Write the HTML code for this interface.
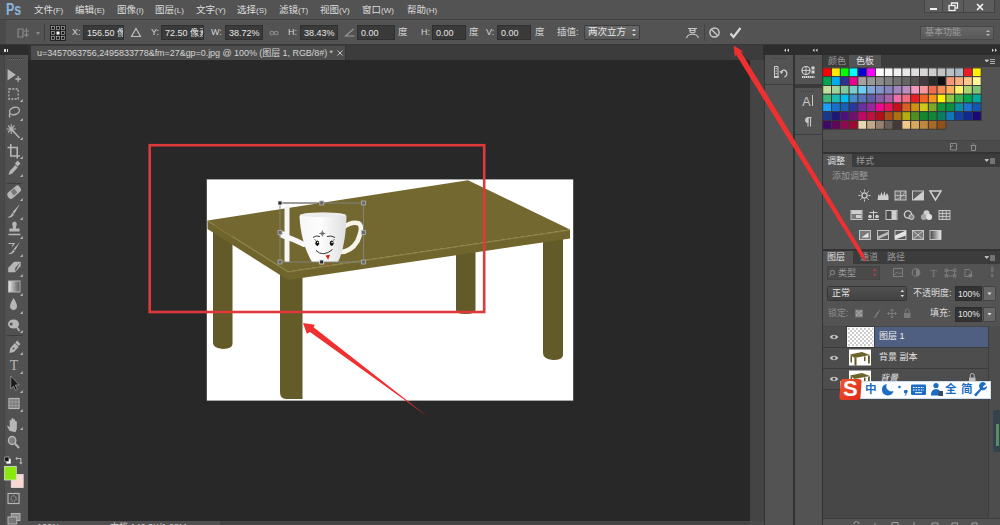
<!DOCTYPE html>
<html lang="zh-CN">
<head>
<meta charset="utf-8">
<title>Photoshop</title>
<style>
*{box-sizing:border-box;margin:0;padding:0}
html,body{width:1000px;height:525px;overflow:hidden;background:#282828}
body{position:relative;font-family:"Liberation Sans","Noto Sans CJK SC",sans-serif;font-size:9px;color:#d8d8d8;line-height:1}
.a{position:absolute}
.t{position:absolute;white-space:nowrap}
/* bars */
#menubar{left:0;top:0;width:1000px;height:19px;background:#535353}
#optbar{left:0;top:19px;width:1000px;height:26px;background:#535353;border-top:1px solid #424242;border-bottom:1px solid #383838}
#tabbar{left:0;top:45px;width:764px;height:15px;background:#3c3c3c}
.mi{position:absolute;top:5px;font-size:9.5px;color:#dedede;white-space:nowrap}
.mi small{font-size:8px}
.inp{position:absolute;background:#3a3a3a;border:1px solid #303030;color:#e6e6e6;font-size:9px;padding:3px 0 0 3px;white-space:nowrap;overflow:hidden}
.ol{position:absolute;color:#d6d6d6;font-size:9px;white-space:nowrap}
</style>
</head>
<body>
<!-- MENU BAR -->
<div id="menubar" class="a">
  <div class="t" style="left:5.500px;top:1.500px;font-size:16px;font-weight:bold;color:#8db3df;transform:scaleX(0.780);transform-origin:0 0">Ps</div>
  <div class="mi" style="left:34px">文件<small>(F)</small></div>
  <div class="mi" style="left:75px">编辑<small>(E)</small></div>
  <div class="mi" style="left:117px">图像<small>(I)</small></div>
  <div class="mi" style="left:155px">图层<small>(L)</small></div>
  <div class="mi" style="left:196px">文字<small>(Y)</small></div>
  <div class="mi" style="left:237px">选择<small>(S)</small></div>
  <div class="mi" style="left:279px">滤镜<small>(T)</small></div>
  <div class="mi" style="left:320px">视图<small>(V)</small></div>
  <div class="mi" style="left:362px">窗口<small>(W)</small></div>
  <div class="mi" style="left:407px">帮助<small>(H)</small></div>
  <!-- window controls -->
  <div class="a" style="left:924px;top:0;width:19px;height:13px;background:#5c5c5c;border:1px solid #444;border-top:none"></div>
  <div class="a" style="left:943px;top:0;width:21px;height:13px;background:#5c5c5c;border:1px solid #444;border-top:none;border-left:none"></div>
  <div class="a" style="left:964px;top:0;width:31px;height:13px;background:#5c5c5c;border:1px solid #444;border-top:none;border-left:none"></div>
  <div class="a" style="left:930px;top:8px;width:7px;height:2px;background:#f0f0f0"></div>
  <svg class="a" style="left:948px;top:2px" width="11" height="10" viewBox="0 0 11 10"><path d="M3.5 3V1h6v5H7.500" fill="none" stroke="#f0f0f0" stroke-width="1.3"/><rect x="1" y="3.5" width="6" height="5" fill="none" stroke="#f0f0f0" stroke-width="1.3"/></svg>
  <svg class="a" style="left:976px;top:3px" width="8" height="8" viewBox="0 0 8 8"><path d="M1 1l6 6M7 1L1 7" stroke="#f4f4f4" stroke-width="1.6"/></svg>
</div>

<!-- OPTIONS BAR -->
<div id="optbar" class="a"></div>
<div class="a" style="left:0;top:20px;width:6px;height:24px;background:#4a4a4a"></div>
<!-- tool icon -->
<svg class="a" style="left:16px;top:26px" width="16" height="14" viewBox="0 0 16 14"><path d="M2 3h5v8H2zM8 5h5M10.500 2v9M8 9h5" fill="none" stroke="#8a8a8a" stroke-width="1.2"/></svg>
<div class="a" style="left:36px;top:32px;width:0;height:0;border-left:2.5px solid transparent;border-right:2.5px solid transparent;border-top:3px solid #8a8a8a"></div>
<div class="a" style="left:44px;top:24px;width:1px;height:17px;background:#404040"></div>
<!-- reference point grid -->
<svg class="a" style="left:50px;top:25px" width="16" height="16" viewBox="0 0 16 16"><rect x="0" y="0" width="16" height="16" fill="#242424"/>
<g fill="#1a1a1a" stroke="#a8a8a8" stroke-width="0.700"><rect x="1.500" y="1.500" width="3" height="3"/><rect x="6.500" y="1.500" width="3" height="3"/><rect x="11.500" y="1.500" width="3" height="3"/><rect x="1.500" y="6.500" width="3" height="3"/><rect x="11.500" y="6.500" width="3" height="3"/><rect x="1.500" y="11.500" width="3" height="3"/><rect x="6.500" y="11.500" width="3" height="3"/><rect x="11.500" y="11.500" width="3" height="3"/></g><rect x="6.500" y="6.500" width="3" height="3" fill="#fff"/></svg>
<div class="ol" style="left:72px;top:28px">X:</div>
<div class="inp" style="left:83px;top:25px;width:41px;height:15px">156.50 像素</div>
<svg class="a" style="left:130px;top:27px" width="12" height="11" viewBox="0 0 12 11"><path d="M6 1.500L10.500 9.500h-9z" fill="none" stroke="#bdbdbd" stroke-width="1.200"/></svg>
<div class="ol" style="left:151px;top:28px">Y:</div>
<div class="inp" style="left:161px;top:25px;width:43px;height:15px">72.50 像素</div>
<div class="ol" style="left:211px;top:28px">W:</div>
<div class="inp" style="left:225px;top:25px;width:38px;height:15px">38.72%</div>
<svg class="a" style="left:269px;top:30px" width="10" height="6" viewBox="0 0 10 6"><circle cx="2.800" cy="3" r="1.800" fill="none" stroke="#8c8c8c" stroke-width="1.100"/><circle cx="7.200" cy="3" r="1.800" fill="none" stroke="#8c8c8c" stroke-width="1.100"/></svg>
<div class="ol" style="left:288px;top:28px">H:</div>
<div class="inp" style="left:300px;top:25px;width:38px;height:15px">38.43%</div>
<svg class="a" style="left:344px;top:28px" width="11" height="9" viewBox="0 0 11 9"><path d="M9.500 1L1.500 8h9" fill="none" stroke="#9a9a9a" stroke-width="1.100"/></svg>
<div class="inp" style="left:357px;top:25px;width:38px;height:15px">0.00</div>
<div class="ol" style="left:398px;top:27px;font-size:9.500px">度</div>
<div class="ol" style="left:421px;top:28px">H:</div>
<div class="inp" style="left:432px;top:25px;width:34px;height:15px">0.00</div>
<div class="ol" style="left:469px;top:27px;font-size:9.500px">度</div>
<div class="ol" style="left:486px;top:28px">V:</div>
<div class="inp" style="left:497px;top:25px;width:34px;height:15px">0.00</div>
<div class="ol" style="left:535px;top:27px;font-size:9.500px">度</div>
<div class="ol" style="left:557px;top:27px;font-size:9.500px">插值:</div>
<div class="a" style="left:584px;top:25px;width:56px;height:15px;background:linear-gradient(#686868,#585858);border:1px solid #3e3e3e;border-radius:1px"></div>
<div class="ol" style="left:588px;top:27px;font-size:9.500px;color:#e8e8e8">两次立方</div>
<div class="a" style="left:632px;top:29px;width:0;height:0;border-left:2px solid transparent;border-right:2px solid transparent;border-bottom:2.500px solid #ddd"></div>
<div class="a" style="left:632px;top:33.500px;width:0;height:0;border-left:2px solid transparent;border-right:2px solid transparent;border-top:2.500px solid #ddd"></div>
<!-- warp / cancel / commit -->
<svg class="a" style="left:685px;top:26px" width="15" height="14" viewBox="0 0 15 14"><path d="M3 2.500h9M1.500 12c1.500-5 10.500-5 12 0M5 3c0 2 5 2 5 0M5 3v3q2.500 1.500 5 0V3" fill="none" stroke="#c4c4c4" stroke-width="1.100"/></svg>
<svg class="a" style="left:708px;top:26px" width="13" height="13" viewBox="0 0 13 13"><circle cx="6.500" cy="6.500" r="4.600" fill="none" stroke="#c8c8c8" stroke-width="1.500"/><path d="M3.300 3.300l6.400 6.400" stroke="#c8c8c8" stroke-width="1.500"/></svg>
<svg class="a" style="left:729px;top:26px" width="13" height="13" viewBox="0 0 13 13"><path d="M1.500 7.500l3 3.500l7-9" fill="none" stroke="#d8d8d8" stroke-width="2.200"/></svg>
<div class="a" style="left:704px;top:24px;width:1px;height:17px;background:#444"></div>
<!-- workspace dropdown -->
<div class="a" style="left:920px;top:26px;width:74px;height:14px;background:linear-gradient(#666,#595959);border:1px solid #474747"></div>
<div class="ol" style="left:925px;top:28px;font-size:9px;color:#9c9c9c">基本功能</div>
<div class="a" style="left:986px;top:30px;width:0;height:0;border-left:2px solid transparent;border-right:2px solid transparent;border-bottom:2.500px solid #bbb"></div>
<div class="a" style="left:986px;top:34px;width:0;height:0;border-left:2px solid transparent;border-right:2px solid transparent;border-top:2.500px solid #bbb"></div>

<!-- TAB BAR -->
<div id="tabbar" class="a"></div>
<div class="a" style="left:31px;top:46px;width:315px;height:14px;background:#4d4d4d;border-right:1px solid #333"></div>
<div class="t" style="left:37px;top:49px;font-size:9px;color:#d4d4d4;letter-spacing:-0.050px">u=3457063756,2495833778&amp;fm=27&amp;gp=0.jpg @ 100% (图层 1, RGB/8#) *</div>
<svg class="a" style="left:336.500px;top:50px" width="6" height="6" viewBox="0 0 6 6"><path d="M0.500 0.500l5 5M5.500 0.500l-5 5" stroke="#c0c0c0" stroke-width="1"/></svg>
<!-- TOOLBAR -->
<div class="a" style="left:0;top:45px;width:28px;height:480px;background:#515151"></div>
<div class="a" style="left:0;top:55px;width:5px;height:470px;background:#494949;border-right:1px solid #444"></div>
<div class="a" style="left:0;top:45px;width:28px;height:10px;background:#2c2c2c"></div>
<div class="a" style="left:28px;top:45px;width:3px;height:15px;background:#303030"></div>
<div class="a" style="left:4px;top:49px;width:1.500px;height:2.500px;background:#ddd"></div>
<div class="a" style="left:6.500px;top:49px;width:1.500px;height:2.500px;background:#ddd"></div>
<div class="a" style="left:8px;top:58px;width:14px;height:2px;border-top:1px dotted #3a3a3a;border-bottom:1px dotted #6a6a6a"></div>
<svg class="a" style="left:0;top:0" width="28" height="525" viewBox="0 0 28 525"><g transform="translate(14 0) scale(0.920 1) translate(-14 0)">
<path d="M7 69l0 11.500l9-5.700z" fill="#b6b6b6"/><path d="M15.500 79h6M18.500 76v6" stroke="#b6b6b6" stroke-width="1.300"/><rect x="8.500" y="89" width="10" height="10" fill="none" stroke="#b6b6b6" stroke-width="1.300" stroke-dasharray="2.200 1.400"/><path d="M23.500 99v3h-3z" fill="#b6b6b6"/><ellipse cx="14.500" cy="111" rx="5.500" ry="3.600" fill="none" stroke="#b6b6b6" stroke-width="1.400" transform="rotate(-15 14.500 111)"/><path d="M9.500 113.500q-1.500 2.500 0.500 4" fill="none" stroke="#b6b6b6" stroke-width="1.200"/><path d="M23.500 118v3h-3z" fill="#b6b6b6"/><path d="M11 129l9 9" stroke="#b6b6b6" stroke-width="1.700"/><path d="M11 124v10M6 129h10M7.500 125.500l7 7M14.500 125.500l-7 7" stroke="#b6b6b6" stroke-width="1.100"/><path d="M23.500 137v3h-3z" fill="#b6b6b6"/><path d="M10.500 144v12h10M7 147.500h10.500v11" fill="none" stroke="#b6b6b6" stroke-width="1.700"/><path d="M23.500 156v3h-3z" fill="#b6b6b6"/><path d="M8 175l1.500-4l6-6l2.500 2.500l-6 6z" fill="#b6b6b6"/><path d="M15 163.500l3-3l3 3l-3 3z" fill="#b6b6b6"/><path d="M23.500 174v3h-3z" fill="#b6b6b6"/><path d="M6 183.500h17" stroke="#3d3d3d" stroke-width="1"/><rect x="6" y="188.500" width="16" height="7.500" rx="3" fill="#b6b6b6" transform="rotate(-38 14 192)"/><rect x="11.500" y="189.500" width="5" height="5" fill="#777" transform="rotate(-38 14 192)"/><path d="M23.500 198v3h-3z" fill="#b6b6b6"/><path d="M20.500 204l-8 8l1.800 1.800z" fill="#b6b6b6"/><path d="M12 212.500q-1 4-5 4.500q3.500 2 7-2.300z" fill="#b6b6b6"/><path d="M23.500 217v3h-3z" fill="#b6b6b6"/><path d="M12 224a2.500 2.500 0 1 1 5 0l-1 4.500h4v3h-11v-3h4z" fill="#b6b6b6"/><path d="M8 234.500h13" stroke="#b6b6b6" stroke-width="1.500"/><path d="M23.500 236v3h-3z" fill="#b6b6b6"/><path d="M20.500 242l-7 7l1.600 1.600z" fill="#b6b6b6"/><path d="M13 249.500q-1 3.500-5 4q3.500 2 6.800-2.200z" fill="#b6b6b6"/><path d="M8 243.500h6l-2 3" fill="none" stroke="#b6b6b6" stroke-width="1.200"/><path d="M23.500 254v3h-3z" fill="#b6b6b6"/><path d="M8 268l6-6h7l-6 6zM8 268v4h7v-4M15 272l6-6v-4" fill="#b6b6b6" stroke="#b6b6b6" stroke-width="0.600"/><path d="M23.500 274v3h-3z" fill="#b6b6b6"/><defs><linearGradient id="gr1"><stop offset="0" stop-color="#e8e8e8"/><stop offset="1" stop-color="#555"/></linearGradient></defs><rect x="8" y="281" width="12.500" height="11" fill="url(#gr1)" stroke="#b6b6b6" stroke-width="1"/><path d="M23.500 293v3h-3z" fill="#b6b6b6"/><path d="M13.500 298q5 7 3.500 10a4 4 0 0 1-7 0q-1.500-3 3.500-10z" fill="#b6b6b6"/><path d="M23.500 311v3h-3z" fill="#b6b6b6"/><ellipse cx="13.500" cy="324" rx="6" ry="4.500" fill="#b6b6b6"/><circle cx="11" cy="324" r="1.600" fill="#555"/><path d="M17 327l3 4" stroke="#b6b6b6" stroke-width="2"/><path d="M23.500 330v3h-3z" fill="#b6b6b6"/><path d="M6 335.500h17" stroke="#3d3d3d" stroke-width="1"/><path d="M9 353l1-5l5-5l4 4l-5 5z" fill="#b6b6b6"/><path d="M15.500 342.500l2-2l3.500 3.500l-2 2z" fill="#b6b6b6"/><circle cx="13.500" cy="348.500" r="1.100" fill="#555"/><path d="M23.500 352v3h-3z" fill="#b6b6b6"/><text x="14" y="370.500" font-family="Liberation Serif,serif" font-size="15" fill="#b6b6b6" text-anchor="middle">T</text><path d="M23.500 371v3h-3z" fill="#b6b6b6"/><path d="M10.500 376v13l3-3l2.200 4.500l2-1l-2.200-4.500h4.200z" fill="#1a1a1a" stroke="#9a9a9a" stroke-width="0.800"/><path d="M23.500 390v3h-3z" fill="#b6b6b6"/><rect x="8.500" y="398.500" width="11" height="10" fill="#7a7a7a" stroke="#b6b6b6" stroke-width="1.200"/><path d="M12 398.500v10M16 398.500v10M8.500 402h11M8.500 405.500h11" stroke="#b6b6b6" stroke-width="0.500"/><path d="M23.500 409v3h-3z" fill="#b6b6b6"/><path d="M9.500 431q-2.500-3-3-5q1-1 2.800 1.500v-7q1.200-1.200 1.900 0v-2q1.300-1.200 2 0v1q1.300-1 2 0.300v1.500q1.300-0.800 1.900 0.500v6q0 3-1.600 4.500z" fill="#b6b6b6"/><path d="M23.500 427v3h-3z" fill="#b6b6b6"/><circle cx="12" cy="440.500" r="4" fill="#7e7e7e" stroke="#b6b6b6" stroke-width="1.500"/><path d="M15 443.500l4.500 4.500" stroke="#b6b6b6" stroke-width="2.200"/><rect x="6" y="459" width="4.500" height="4.500" fill="#fff" stroke="#bbb" stroke-width="0.500"/><rect x="4" y="457" width="4.500" height="4.500" fill="#111" stroke="#ccc" stroke-width="0.600"/><path d="M17 458.500h4.500v4.500" fill="none" stroke="#b6b6b6" stroke-width="1.200"/><path d="M17.500 456.500l-2 2l2 2zM19.500 462.500l2 2l2-2z" fill="#b6b6b6"/><rect x="11" y="474.500" width="13" height="13" fill="#f9d9cf" stroke="#e6e6e6" stroke-width="0.800"/><rect x="3.500" y="466.500" width="13" height="13.500" fill="#8be80c" stroke="#dcdcdc" stroke-width="0.800"/><rect x="7.500" y="493.500" width="12" height="10" fill="none" stroke="#b6b6b6" stroke-width="1.200"/><circle cx="13.500" cy="498.500" r="2.800" fill="none" stroke="#b6b6b6" stroke-width="1" stroke-dasharray="1.500 1"/><rect x="11" y="513.500" width="9.500" height="7" fill="#8a8a8a" stroke="#b6b6b6" stroke-width="1"/><rect x="7.500" y="517" width="9.500" height="7" fill="#777" stroke="#b6b6b6" stroke-width="1"/>
</g></svg>
<!-- DOCK -->
<div class="a" style="left:763px;top:45px;width:237px;height:480px;background:#333"></div>
<div class="a" style="left:763px;top:45px;width:237px;height:10px;background:#2d2d2d"></div>
<!-- column 1 -->
<div class="a" style="left:765px;top:55px;width:27.500px;height:470px;background:#535353"></div>
<div class="a" style="left:765px;top:84px;width:27.500px;height:1px;background:#3e3e3e"></div>
<!-- column 2 -->
<div class="a" style="left:795px;top:55px;width:26.500px;height:470px;background:#535353"></div>
<div class="a" style="left:795px;top:84px;width:26.500px;height:4px;background:#3a3a3a"></div>
<div class="a" style="left:795px;top:134px;width:26.500px;height:1px;background:#3e3e3e"></div>
<!-- swatches panel -->
<div class="a" style="left:823px;top:55px;width:177px;height:97px;background:#535353"></div>
<div class="a" style="left:823px;top:55px;width:177px;height:12px;background:#3c3c3c"></div>
<div class="a" style="left:849px;top:55px;width:32px;height:12px;background:#535353"></div>
<div class="t" style="left:828px;top:57px;font-size:9px;color:#9a9a9a">颜色</div>
<div class="t" style="left:856px;top:57px;font-size:9px;color:#e2e2e2">色板</div>
<div class="a" style="left:823px;top:140px;width:177px;height:12px;background:#4b4b4b;border-top:1px solid #444"></div>
<!-- adjustments panel -->
<div class="a" style="left:823px;top:154px;width:177px;height:95px;background:#535353"></div>
<div class="a" style="left:823px;top:154px;width:177px;height:13px;background:#3c3c3c"></div>
<div class="a" style="left:823px;top:154px;width:29px;height:13px;background:#535353"></div>
<div class="t" style="left:827px;top:156.500px;font-size:9px;color:#e2e2e2">调整</div>
<div class="t" style="left:856px;top:156.500px;font-size:9px;color:#9a9a9a">样式</div>
<div class="t" style="left:832px;top:172px;font-size:9px;color:#9b9b9b">添加调整</div>
<!-- layers panel -->
<div class="a" style="left:823px;top:251px;width:177px;height:274px;background:#535353"></div>
<div class="a" style="left:823px;top:251px;width:177px;height:12.500px;background:#3c3c3c"></div>
<div class="a" style="left:823px;top:251px;width:30px;height:12.500px;background:#535353"></div>
<div class="t" style="left:827px;top:253px;font-size:9px;color:#e2e2e2">图层</div>
<div class="t" style="left:860px;top:253px;font-size:9px;color:#9a9a9a">通道</div>
<div class="t" style="left:887px;top:253px;font-size:9px;color:#9a9a9a">路径</div>
<div class="a" style="left:823px;top:326px;width:165px;height:192px;background:#474747"></div>
<div class="a" style="left:988px;top:326px;width:12px;height:192px;background:#4d4d4d;border-left:1px solid #3e3e3e"></div>
<div class="a" style="left:823px;top:518px;width:177px;height:7px;background:#535353;border-top:1px solid #3e3e3e"></div>
<svg class="a" style="left:0;top:0" width="1000" height="525" viewBox="0 0 1000 525">
<defs><linearGradient id="gm"><stop offset="0" stop-color="#444"/><stop offset="1" stop-color="#eee"/></linearGradient></defs>
<rect x="822.75" y="67.95" width="8.800" height="8.750" fill="#ff0000" stroke="#383838" stroke-width="0.900"/><rect x="831.55" y="67.95" width="8.800" height="8.750" fill="#ffec00" stroke="#383838" stroke-width="0.900"/><rect x="840.35" y="67.95" width="8.800" height="8.750" fill="#00ff00" stroke="#383838" stroke-width="0.900"/><rect x="849.15" y="67.95" width="8.800" height="8.750" fill="#00ffff" stroke="#383838" stroke-width="0.900"/><rect x="857.95" y="67.95" width="8.800" height="8.750" fill="#0000d0" stroke="#383838" stroke-width="0.900"/><rect x="866.75" y="67.95" width="8.800" height="8.750" fill="#ff00ff" stroke="#383838" stroke-width="0.900"/><rect x="875.55" y="67.95" width="8.800" height="8.750" fill="#ffffff" stroke="#383838" stroke-width="0.900"/><rect x="884.35" y="67.95" width="8.800" height="8.750" fill="#f7f7f7" stroke="#383838" stroke-width="0.900"/><rect x="893.15" y="67.95" width="8.800" height="8.750" fill="#efefef" stroke="#383838" stroke-width="0.900"/><rect x="901.95" y="67.95" width="8.800" height="8.750" fill="#e6e6e6" stroke="#383838" stroke-width="0.900"/><rect x="910.75" y="67.95" width="8.800" height="8.750" fill="#dedede" stroke="#383838" stroke-width="0.900"/><rect x="919.55" y="67.95" width="8.800" height="8.750" fill="#d6d6d6" stroke="#383838" stroke-width="0.900"/><rect x="928.35" y="67.95" width="8.800" height="8.750" fill="#cdcdcd" stroke="#383838" stroke-width="0.900"/><rect x="937.15" y="67.95" width="8.800" height="8.750" fill="#c4c4c4" stroke="#383838" stroke-width="0.900"/><rect x="945.95" y="67.95" width="8.800" height="8.750" fill="#b8c0c8" stroke="#383838" stroke-width="0.900"/><rect x="954.75" y="67.95" width="8.800" height="8.750" fill="#acb8c4" stroke="#383838" stroke-width="0.900"/><rect x="963.55" y="67.95" width="8.800" height="8.750" fill="#ed1c24" stroke="#383838" stroke-width="0.900"/><rect x="972.35" y="67.95" width="8.800" height="8.750" fill="#fff200" stroke="#383838" stroke-width="0.900"/><rect x="822.75" y="76.70" width="8.800" height="8.750" fill="#00a651" stroke="#383838" stroke-width="0.900"/><rect x="831.55" y="76.70" width="8.800" height="8.750" fill="#00aeef" stroke="#383838" stroke-width="0.900"/><rect x="840.35" y="76.70" width="8.800" height="8.750" fill="#2e3192" stroke="#383838" stroke-width="0.900"/><rect x="849.15" y="76.70" width="8.800" height="8.750" fill="#ec008c" stroke="#383838" stroke-width="0.900"/><rect x="857.95" y="76.70" width="8.800" height="8.750" fill="#a8a0a0" stroke="#383838" stroke-width="0.900"/><rect x="866.75" y="76.70" width="8.800" height="8.750" fill="#989898" stroke="#383838" stroke-width="0.900"/><rect x="875.55" y="76.70" width="8.800" height="8.750" fill="#8c8c8c" stroke="#383838" stroke-width="0.900"/><rect x="884.35" y="76.70" width="8.800" height="8.750" fill="#808080" stroke="#383838" stroke-width="0.900"/><rect x="893.15" y="76.70" width="8.800" height="8.750" fill="#727272" stroke="#383838" stroke-width="0.900"/><rect x="901.95" y="76.70" width="8.800" height="8.750" fill="#646464" stroke="#383838" stroke-width="0.900"/><rect x="910.75" y="76.70" width="8.800" height="8.750" fill="#545454" stroke="#383838" stroke-width="0.900"/><rect x="919.55" y="76.70" width="8.800" height="8.750" fill="#423c42" stroke="#383838" stroke-width="0.900"/><rect x="928.35" y="76.70" width="8.800" height="8.750" fill="#2a2a2a" stroke="#383838" stroke-width="0.900"/><rect x="937.15" y="76.70" width="8.800" height="8.750" fill="#101010" stroke="#383838" stroke-width="0.900"/><rect x="945.95" y="76.70" width="8.800" height="8.750" fill="#f7977a" stroke="#383838" stroke-width="0.900"/><rect x="954.75" y="76.70" width="8.800" height="8.750" fill="#f9ad81" stroke="#383838" stroke-width="0.900"/><rect x="963.55" y="76.70" width="8.800" height="8.750" fill="#fdc68a" stroke="#383838" stroke-width="0.900"/><rect x="972.35" y="76.70" width="8.800" height="8.750" fill="#fff79a" stroke="#383838" stroke-width="0.900"/><rect x="822.75" y="85.45" width="8.800" height="8.750" fill="#c4df9b" stroke="#383838" stroke-width="0.900"/><rect x="831.55" y="85.45" width="8.800" height="8.750" fill="#a2d39c" stroke="#383838" stroke-width="0.900"/><rect x="840.35" y="85.45" width="8.800" height="8.750" fill="#82ca9d" stroke="#383838" stroke-width="0.900"/><rect x="849.15" y="85.45" width="8.800" height="8.750" fill="#7bcdc8" stroke="#383838" stroke-width="0.900"/><rect x="857.95" y="85.45" width="8.800" height="8.750" fill="#6ecff6" stroke="#383838" stroke-width="0.900"/><rect x="866.75" y="85.45" width="8.800" height="8.750" fill="#7ea7d8" stroke="#383838" stroke-width="0.900"/><rect x="875.55" y="85.45" width="8.800" height="8.750" fill="#8493ca" stroke="#383838" stroke-width="0.900"/><rect x="884.35" y="85.45" width="8.800" height="8.750" fill="#8882be" stroke="#383838" stroke-width="0.900"/><rect x="893.15" y="85.45" width="8.800" height="8.750" fill="#a187be" stroke="#383838" stroke-width="0.900"/><rect x="901.95" y="85.45" width="8.800" height="8.750" fill="#bc8dbf" stroke="#383838" stroke-width="0.900"/><rect x="910.75" y="85.45" width="8.800" height="8.750" fill="#f49ac2" stroke="#383838" stroke-width="0.900"/><rect x="919.55" y="85.45" width="8.800" height="8.750" fill="#f6989d" stroke="#383838" stroke-width="0.900"/><rect x="928.35" y="85.45" width="8.800" height="8.750" fill="#f26c4f" stroke="#383838" stroke-width="0.900"/><rect x="937.15" y="85.45" width="8.800" height="8.750" fill="#f68e55" stroke="#383838" stroke-width="0.900"/><rect x="945.95" y="85.45" width="8.800" height="8.750" fill="#fbaf5c" stroke="#383838" stroke-width="0.900"/><rect x="954.75" y="85.45" width="8.800" height="8.750" fill="#fff467" stroke="#383838" stroke-width="0.900"/><rect x="963.55" y="85.45" width="8.800" height="8.750" fill="#acd372" stroke="#383838" stroke-width="0.900"/><rect x="972.35" y="85.45" width="8.800" height="8.750" fill="#7cc576" stroke="#383838" stroke-width="0.900"/><rect x="822.75" y="94.20" width="8.800" height="8.750" fill="#3bb878" stroke="#383838" stroke-width="0.900"/><rect x="831.55" y="94.20" width="8.800" height="8.750" fill="#1abbb4" stroke="#383838" stroke-width="0.900"/><rect x="840.35" y="94.20" width="8.800" height="8.750" fill="#00bff3" stroke="#383838" stroke-width="0.900"/><rect x="849.15" y="94.20" width="8.800" height="8.750" fill="#438cca" stroke="#383838" stroke-width="0.900"/><rect x="857.95" y="94.20" width="8.800" height="8.750" fill="#5574b9" stroke="#383838" stroke-width="0.900"/><rect x="866.75" y="94.20" width="8.800" height="8.750" fill="#605ca8" stroke="#383838" stroke-width="0.900"/><rect x="875.55" y="94.20" width="8.800" height="8.750" fill="#855fa8" stroke="#383838" stroke-width="0.900"/><rect x="884.35" y="94.20" width="8.800" height="8.750" fill="#a763a8" stroke="#383838" stroke-width="0.900"/><rect x="893.15" y="94.20" width="8.800" height="8.750" fill="#f06ea9" stroke="#383838" stroke-width="0.900"/><rect x="901.95" y="94.20" width="8.800" height="8.750" fill="#f26d7d" stroke="#383838" stroke-width="0.900"/><rect x="910.75" y="94.20" width="8.800" height="8.750" fill="#ed1c24" stroke="#383838" stroke-width="0.900"/><rect x="919.55" y="94.20" width="8.800" height="8.750" fill="#f26522" stroke="#383838" stroke-width="0.900"/><rect x="928.35" y="94.20" width="8.800" height="8.750" fill="#f7941d" stroke="#383838" stroke-width="0.900"/><rect x="937.15" y="94.20" width="8.800" height="8.750" fill="#fff200" stroke="#383838" stroke-width="0.900"/><rect x="945.95" y="94.20" width="8.800" height="8.750" fill="#8dc73f" stroke="#383838" stroke-width="0.900"/><rect x="954.75" y="94.20" width="8.800" height="8.750" fill="#39b54a" stroke="#383838" stroke-width="0.900"/><rect x="963.55" y="94.20" width="8.800" height="8.750" fill="#00a651" stroke="#383838" stroke-width="0.900"/><rect x="972.35" y="94.20" width="8.800" height="8.750" fill="#00a99d" stroke="#383838" stroke-width="0.900"/><rect x="822.75" y="102.95" width="8.800" height="8.750" fill="#18a0ff" stroke="#383838" stroke-width="0.900"/><rect x="831.55" y="102.95" width="8.800" height="8.750" fill="#1870c8" stroke="#383838" stroke-width="0.900"/><rect x="840.35" y="102.95" width="8.800" height="8.750" fill="#1860b8" stroke="#383838" stroke-width="0.900"/><rect x="849.15" y="102.95" width="8.800" height="8.750" fill="#2838a0" stroke="#383838" stroke-width="0.900"/><rect x="857.95" y="102.95" width="8.800" height="8.750" fill="#6830a0" stroke="#383838" stroke-width="0.900"/><rect x="866.75" y="102.95" width="8.800" height="8.750" fill="#9828a0" stroke="#383838" stroke-width="0.900"/><rect x="875.55" y="102.95" width="8.800" height="8.750" fill="#f00890" stroke="#383838" stroke-width="0.900"/><rect x="884.35" y="102.95" width="8.800" height="8.750" fill="#f01060" stroke="#383838" stroke-width="0.900"/><rect x="893.15" y="102.95" width="8.800" height="8.750" fill="#c81018" stroke="#383838" stroke-width="0.900"/><rect x="901.95" y="102.95" width="8.800" height="8.750" fill="#d86020" stroke="#383838" stroke-width="0.900"/><rect x="910.75" y="102.95" width="8.800" height="8.750" fill="#d09010" stroke="#383838" stroke-width="0.900"/><rect x="919.55" y="102.95" width="8.800" height="8.750" fill="#d0c818" stroke="#383838" stroke-width="0.900"/><rect x="928.35" y="102.95" width="8.800" height="8.750" fill="#80a828" stroke="#383838" stroke-width="0.900"/><rect x="937.15" y="102.95" width="8.800" height="8.750" fill="#109838" stroke="#383838" stroke-width="0.900"/><rect x="945.95" y="102.95" width="8.800" height="8.750" fill="#089040" stroke="#383838" stroke-width="0.900"/><rect x="954.75" y="102.95" width="8.800" height="8.750" fill="#0890a0" stroke="#383838" stroke-width="0.900"/><rect x="963.55" y="102.95" width="8.800" height="8.750" fill="#2070d0" stroke="#383838" stroke-width="0.900"/><rect x="972.35" y="102.95" width="8.800" height="8.750" fill="#1058b0" stroke="#383838" stroke-width="0.900"/><rect x="822.75" y="111.70" width="8.800" height="8.750" fill="#183890" stroke="#383838" stroke-width="0.900"/><rect x="831.55" y="111.70" width="8.800" height="8.750" fill="#201878" stroke="#383838" stroke-width="0.900"/><rect x="840.35" y="111.70" width="8.800" height="8.750" fill="#501080" stroke="#383838" stroke-width="0.900"/><rect x="849.15" y="111.70" width="8.800" height="8.750" fill="#701070" stroke="#383838" stroke-width="0.900"/><rect x="857.95" y="111.70" width="8.800" height="8.750" fill="#c00868" stroke="#383838" stroke-width="0.900"/><rect x="866.75" y="111.70" width="8.800" height="8.750" fill="#c01040" stroke="#383838" stroke-width="0.900"/><rect x="875.55" y="111.70" width="8.800" height="8.750" fill="#b01018" stroke="#383838" stroke-width="0.900"/><rect x="884.35" y="111.70" width="8.800" height="8.750" fill="#b04818" stroke="#383838" stroke-width="0.900"/><rect x="893.15" y="111.70" width="8.800" height="8.750" fill="#b07010" stroke="#383838" stroke-width="0.900"/><rect x="901.95" y="111.70" width="8.800" height="8.750" fill="#b0b010" stroke="#383838" stroke-width="0.900"/><rect x="910.75" y="111.70" width="8.800" height="8.750" fill="#509020" stroke="#383838" stroke-width="0.900"/><rect x="919.55" y="111.70" width="8.800" height="8.750" fill="#108830" stroke="#383838" stroke-width="0.900"/><rect x="928.35" y="111.70" width="8.800" height="8.750" fill="#108838" stroke="#383838" stroke-width="0.900"/><rect x="937.15" y="111.70" width="8.800" height="8.750" fill="#088060" stroke="#383838" stroke-width="0.900"/><rect x="945.95" y="111.70" width="8.800" height="8.750" fill="#1078b8" stroke="#383838" stroke-width="0.900"/><rect x="954.75" y="111.70" width="8.800" height="8.750" fill="#1040a0" stroke="#383838" stroke-width="0.900"/><rect x="963.55" y="111.70" width="8.800" height="8.750" fill="#102890" stroke="#383838" stroke-width="0.900"/><rect x="972.35" y="111.70" width="8.800" height="8.750" fill="#180878" stroke="#383838" stroke-width="0.900"/><rect x="822.75" y="120.45" width="8.800" height="8.750" fill="#400868" stroke="#383838" stroke-width="0.900"/><rect x="831.55" y="120.45" width="8.800" height="8.750" fill="#600858" stroke="#383838" stroke-width="0.900"/><rect x="840.35" y="120.45" width="8.800" height="8.750" fill="#900850" stroke="#383838" stroke-width="0.900"/><rect x="849.15" y="120.45" width="8.800" height="8.750" fill="#a00830" stroke="#383838" stroke-width="0.900"/><rect x="857.95" y="120.45" width="8.800" height="8.750" fill="#e8d8b0" stroke="#383838" stroke-width="0.900"/><rect x="866.75" y="120.45" width="8.800" height="8.750" fill="#c0a888" stroke="#383838" stroke-width="0.900"/><rect x="875.55" y="120.45" width="8.800" height="8.750" fill="#988070" stroke="#383838" stroke-width="0.900"/><rect x="884.35" y="120.45" width="8.800" height="8.750" fill="#686058" stroke="#383838" stroke-width="0.900"/><rect x="893.15" y="120.45" width="8.800" height="8.750" fill="#483838" stroke="#383838" stroke-width="0.900"/><rect x="901.95" y="120.45" width="8.800" height="8.750" fill="#f0c888" stroke="#383838" stroke-width="0.900"/><rect x="910.75" y="120.45" width="8.800" height="8.750" fill="#d8a860" stroke="#383838" stroke-width="0.900"/><rect x="919.55" y="120.45" width="8.800" height="8.750" fill="#c08840" stroke="#383838" stroke-width="0.900"/><rect x="928.35" y="120.45" width="8.800" height="8.750" fill="#a86828" stroke="#383838" stroke-width="0.900"/><rect x="937.15" y="120.45" width="8.800" height="8.750" fill="#905018" stroke="#383838" stroke-width="0.900"/>
<circle cx="864.5" cy="195.5" r="2.600" fill="none" stroke="#cfcfcf" stroke-width="1.200"/><path d="M864.5 189.5v2M864.5 199.5v2M858.5 195.5h2M868.5 195.5h2M860.3 191.3l1.400 1.400M867.3 198.3l1.400 1.400M860.3 199.7l1.400-1.400M867.3 192.7l1.400-1.400" stroke="#cfcfcf" stroke-width="1"/><path d="M877.5 200.0h11v-4l-1.500-3l-1.500 3l-1-5l-1.500 5l-1.500-4l-1.500 4l-1.500-2z" fill="#cfcfcf"/><rect x="895.0" y="191.0" width="11" height="9" fill="#6e6e6e" stroke="#cfcfcf" stroke-width="0.900"/><path d="M895.0 200.0q6 -1 11 -9M895.0 195.5h11M900.5 191.0v9" fill="none" stroke="#cfcfcf" stroke-width="0.700"/><rect x="912.5" y="191.0" width="11" height="9" fill="#5a5a5a" stroke="#cfcfcf" stroke-width="0.900"/><path d="M912.5 200.0L923.5 191.0V200.0z" fill="#cfcfcf"/><path d="M930.0 191.0h11l-5.500 9z" fill="none" stroke="#cfcfcf" stroke-width="1.500"/><rect x="851.0" y="210.5" width="11" height="9" fill="#7a7a7a" stroke="#cfcfcf" stroke-width="0.900"/><rect x="851.5" y="211.0" width="10" height="3" fill="#cfcfcf"/><rect x="856.0" y="215.0" width="5" height="3" fill="#cfcfcf"/><path d="M873.5 210.5v8M869.5 212.5h8M868.0 219.5h11" stroke="#cfcfcf" stroke-width="1"/><circle cx="870.0" cy="216.5" r="1.800" fill="#cfcfcf"/><circle cx="877.0" cy="216.5" r="1.800" fill="#cfcfcf"/><rect x="886.0" y="210.5" width="11" height="9" fill="#4a4a4a" stroke="#cfcfcf" stroke-width="0.900"/><rect x="891.5" y="211.0" width="5" height="8" fill="#cfcfcf"/><circle cx="908" cy="214.5" r="3.600" fill="none" stroke="#cfcfcf" stroke-width="1.400"/><circle cx="911.5" cy="217" r="2.500" fill="#888" stroke="#cfcfcf" stroke-width="1"/><circle cx="926.5" cy="213.2" r="3" fill="#cfcfcf"/><circle cx="923.9" cy="217" r="3" fill="#a8a8a8"/><circle cx="929.1" cy="217" r="3" fill="#e0e0e0"/><rect x="939.0" y="210.5" width="11" height="9" fill="#6a6a6a" stroke="#cfcfcf" stroke-width="0.900"/><path d="M942.7 210.5v9M946.3 210.5v9M939.0 213.5h11M939.0 216.5h11" stroke="#cfcfcf" stroke-width="0.800"/><rect x="859.5" y="230.5" width="11" height="9" fill="#7a7a7a" stroke="#cfcfcf" stroke-width="0.900"/><path d="M861.5 237.5L868.5 232.5V237.5z" fill="#e6e6e6"/><rect x="877.5" y="230.5" width="11" height="9" fill="#5a5a5a" stroke="#cfcfcf" stroke-width="0.900"/><path d="M877.5 236.5L888.5 231.5V234.5L877.5 239.5z" fill="#b8b8b8"/><rect x="895.0" y="230.5" width="11" height="9" fill="#5a5a5a" stroke="#cfcfcf" stroke-width="0.900"/><path d="M895.0 235.5L906.0 230.5V235.5L895.0 239.5z" fill="#e4e4e4"/><rect x="912.5" y="230.5" width="11" height="9" fill="#7a7a7a" stroke="#cfcfcf" stroke-width="0.900"/><path d="M912.5 230.5L923.5 239.5M923.5 230.5L912.5 239.5" stroke="#cfcfcf" stroke-width="0.900"/><rect x="930.0" y="230.5" width="11" height="9" fill="url(#gm)" stroke="#cfcfcf" stroke-width="0.900"/>
</svg>
<!-- LAYERS CONTENT -->
<div class="a" style="left:827px;top:266px;width:53px;height:14px;background:#4a4a4a;border:1px solid #444"></div>
<div class="t" style="left:838px;top:268.500px;font-size:9px;color:#9a9a9a">类型</div>
<div class="a" style="left:827px;top:286px;width:80px;height:15px;background:linear-gradient(#505050,#424242);border:1px solid #353535;border-radius:1.500px"></div>
<div class="t" style="left:832px;top:288.500px;font-size:9px;color:#e4e4e4">正常</div>
<div class="t" style="left:913px;top:288.500px;font-size:9px;color:#dcdcdc">不透明度:</div>
<div class="a" style="left:955px;top:286px;width:27px;height:15px;background:#333;border:1px solid #2c2c2c"></div>
<div class="t" style="left:958px;top:289.500px;font-size:8.500px;color:#e6e6e6">100%</div>
<div class="a" style="left:983px;top:286px;width:13px;height:15px;background:#666;border:1px solid #444"></div>
<div class="t" style="left:828px;top:309px;font-size:9px;color:#8c8c8c">锁定:</div>
<div class="t" style="left:930px;top:309px;font-size:9px;color:#dcdcdc">填充:</div>
<div class="a" style="left:955px;top:306.500px;width:27px;height:15px;background:#333;border:1px solid #2c2c2c"></div>
<div class="t" style="left:958px;top:310px;font-size:8.500px;color:#e6e6e6">100%</div>
<div class="a" style="left:983px;top:306.500px;width:13px;height:15px;background:#666;border:1px solid #444"></div>
<!-- layer rows -->
<div class="a" style="left:823px;top:326.500px;width:165px;height:20.500px;background:#4c4c4c"></div>
<div class="a" style="left:874px;top:326.500px;width:114px;height:20.500px;background:#4e5f82"></div>
<div class="a" style="left:823px;top:347px;width:165px;height:1px;background:#3c3c3c"></div>
<div class="a" style="left:823px;top:348px;width:165px;height:20px;background:#4d4d4d"></div>
<div class="a" style="left:823px;top:368px;width:165px;height:1px;background:#3c3c3c"></div>
<div class="a" style="left:823px;top:369px;width:165px;height:20px;background:#4d4d4d"></div>
<div class="a" style="left:823px;top:389px;width:165px;height:1px;background:#3c3c3c"></div>
<div class="t" style="left:879px;top:332px;font-size:9px;color:#f0f0f0">图层 1</div>
<div class="t" style="left:879px;top:353px;font-size:9px;color:#e2e2e2">背景 副本</div>
<div class="t" style="left:880px;top:374px;font-size:9px;color:#e2e2e2;font-style:italic">背景</div>
<svg class="a" style="left:0;top:0" width="1000" height="525" viewBox="0 0 1000 525">
<defs><pattern id="chk" width="4" height="4" patternUnits="userSpaceOnUse"><rect width="4" height="4" fill="#fff"/><rect width="2" height="2" fill="#ccc"/><rect x="2" y="2" width="2" height="2" fill="#ccc"/></pattern></defs>
<!-- filter row icons -->
<circle cx="832.500" cy="272.500" r="2.200" fill="none" stroke="#8e8e8e" stroke-width="1"/><path d="M831 274.500l-1.800 2" stroke="#8e8e8e" stroke-width="1"/>
<path d="M873 271l1.800-2.300l1.800 2.300zM873 274l1.800 2.300l1.800-2.300z" fill="#c04040"/>
<rect x="893.500" y="268.500" width="9" height="8" fill="none" stroke="#7d7d7d" stroke-width="1"/><path d="M894 275l3-3l2 2l1.500-1.500l2 2" fill="none" stroke="#7d7d7d" stroke-width="0.800"/>
<circle cx="916" cy="272.500" r="3.800" fill="none" stroke="#7d7d7d" stroke-width="1.100"/><path d="M916 268.700a3.800 3.800 0 0 1 0 7.600z" fill="#7d7d7d"/>
<text x="933.500" y="276.500" font-family="Liberation Serif,serif" font-size="11" fill="#808080" text-anchor="middle">T</text>
<path d="M946.500 270.500h8v5.500h-8zM945 269h2.500v2.500h-2.500zM953.500 269h2.500v2.500h-2.500zM945 274.500h2.500v2.500h-2.500zM953.500 274.500h2.500v2.500h-2.500z" fill="none" stroke="#7d7d7d" stroke-width="0.900"/>
<path d="M965 276.500v-7h4.500l2 2v5z" fill="none" stroke="#7d7d7d" stroke-width="1"/><circle cx="970.500" cy="275.500" r="2" fill="#7d7d7d"/>
<rect x="991" y="266.500" width="2.500" height="6" rx="1" fill="#6e6e6e"/><rect x="991" y="274" width="2.500" height="3" fill="#6e6e6e"/>
<!-- dropdown arrows -->
<path d="M900.500 292l1.800-2.300l1.800 2.300zM900.500 295l1.800 2.300l1.800-2.300z" fill="#d8d8d8"/>
<path d="M987.500 292.500h4l-2 2.400z" fill="#e4e4e4"/><path d="M987.500 313h4l-2 2.400z" fill="#e4e4e4"/>
<!-- lock icons -->
<rect x="855.500" y="310" width="7" height="7" fill="url(#chk)" opacity="0.450"/><rect x="855.500" y="310" width="7" height="7" fill="none" stroke="#7a7a7a" stroke-width="0.800"/>
<path d="M881 308.500l-5 5.500l1 1zM876 314.500q-0.800 2.500-3 3q2.500 1 4-1.800z" fill="#8a8a8a"/>
<path d="M892 309v9M887.500 313.500h9M890.500 310.500l1.500-1.500l1.500 1.500M890.500 316.500l1.500 1.500l1.500-1.500M889 312l-1.500 1.500l1.500 1.500M895 312l1.500 1.500l-1.500 1.500" fill="none" stroke="#858585" stroke-width="0.800"/>
<rect x="904" y="313" width="6.500" height="5" fill="#7a7a7a"/><path d="M905.300 313v-2a2 2 0 0 1 4 0v2" fill="none" stroke="#7a7a7a" stroke-width="1"/>
<!-- eyes -->
<path d="M829.500 337q4.500-4.500 9 0q-4.500 4.500-9 0z" fill="#c8c8c8"/><circle cx="834" cy="337" r="1.500" fill="#484848"/><path d="M829.500 358q4.500-4.500 9 0q-4.500 4.500-9 0z" fill="#c8c8c8"/><circle cx="834" cy="358" r="1.500" fill="#484848"/><path d="M829.500 379q4.500-4.500 9 0q-4.500 4.500-9 0z" fill="#c8c8c8"/><circle cx="834" cy="379" r="1.500" fill="#484848"/>
<!-- thumbs -->
<rect x="848" y="328" width="25" height="18" fill="url(#chk)"/><rect x="847.500" y="327.500" width="26" height="19" fill="none" stroke="#f4f4f4" stroke-width="1"/><rect x="846.500" y="326.500" width="28" height="21" fill="none" stroke="#3a3a3a" stroke-width="0.800"/>
<rect x="849" y="349.5" width="22" height="16" fill="#fff"/><path d="M850 354.5L862 352.0L870 355.0L854.5 358.0Z" fill="#6e6429"/><path d="M850.5 355.5h1.500v7h-1.500zM854.5 358.0h2v7.5h-2zM864 356.5h1.500v4.500h-1.500zM868 355.5h1.800v8h-1.800z" fill="#615926"/>
<rect x="849" y="370.5" width="22" height="16" fill="#fff"/><path d="M850 375.5L862 373.0L870 376.0L854.5 379.0Z" fill="#6e6429"/><path d="M850.5 376.5h1.500v7h-1.500zM854.5 379.0h2v7.5h-2zM864 377.5h1.500v4.500h-1.500zM868 376.5h1.800v8h-1.800z" fill="#615926"/>
<!-- lock on bg -->
<rect x="969" y="377.500" width="6.500" height="5" fill="#bcbcbc"/><path d="M970.300 377.500v-2a2 2 0 0 1 4 0v2" fill="none" stroke="#bcbcbc" stroke-width="1"/>
<!-- bottom icons -->
<path d="M854 524a2.500 2.500 0 0 1 5 0M875 523v2M892 522.500h6v3h-6zM914 522v3.500M932 523h6v2.500h-6zM952 523h5.500v2.500h-5.500zM972 523h5v2.500h-5z" fill="none" stroke="#a0a0a0" stroke-width="1"/>
<!-- panel menu icons -->
<path d="M985 60h3.500l-1.750 2zM990 59.500h5M990 61.500h5M990 63.500h5" stroke="#c8c8c8" stroke-width="0.800" fill="#c8c8c8"/>
<path d="M985 159.500h3.500l-1.750 2zM990 159h5M990 161h5M990 163h5" stroke="#c8c8c8" stroke-width="0.800" fill="#c8c8c8"/>
<path d="M985 256.500h3.500l-1.750 2zM990 256h5M990 258h5M990 260h5" stroke="#c8c8c8" stroke-width="0.800" fill="#c8c8c8"/>
<!-- dock header arrows -->
<path d="M786 48.500l-2 1.800l2 1.800zM789 48.500l-2 1.800l2 1.800zM814.500 48.500l-2 1.800l2 1.800zM817.500 48.500l-2 1.800l2 1.800zM992 48.500l2 1.800l-2 1.800zM995 48.500l2 1.800l-2 1.800z" fill="#d0d0d0"/>
<!-- col grips -->
<path d="M772 58.500h14M801 58.500h14M801 91.500h14" stroke="#3c3c3c" stroke-width="1" stroke-dasharray="1 1"/>
<!-- col1 history icon -->
<path d="M774.500 66.500h3.500v11h-3.500z" fill="none" stroke="#cfcfcf" stroke-width="1"/><path d="M775.500 68.500h1.500M775.500 71h1.500M775.500 73.500h1.500" stroke="#cfcfcf" stroke-width="0.900"/><rect x="774" y="76" width="4.500" height="2" fill="#cfcfcf"/>
<path d="M781 72.500a3 3.500 0 1 1 3.500 4.500" fill="none" stroke="#cfcfcf" stroke-width="1.300"/><path d="M779.500 71l1.800 3l2-2.300z" fill="#cfcfcf"/>
<!-- col2 icons -->
<circle cx="806" cy="70.500" r="4" fill="none" stroke="#d4d4d4" stroke-width="1.200"/><path d="M802 70.500h8M806 66.500v8" stroke="#d4d4d4" stroke-width="0.900"/><path d="M811.500 66.500h3v3h-3zM811.500 70.500h3v3h-3z" fill="#d4d4d4"/><path d="M802 77h12.500" stroke="#d4d4d4" stroke-width="1.800" stroke-dasharray="1.500 0.500"/>
<text x="806.500" y="105.500" font-size="12.500" fill="#c8c8c8" text-anchor="middle" font-family="Liberation Sans,sans-serif">A</text><path d="M812.500 95v11" stroke="#c8c8c8" stroke-width="1"/>
<path d="M807 117.500h4.500M808 117.500v9M810.500 117.500v9" stroke="#c8c8c8" stroke-width="1.100" fill="none"/><path d="M808 117.500a2.600 2.600 0 0 0 0 5.200z" fill="#c8c8c8" stroke="#c8c8c8" stroke-width="0.800"/>
<!-- swatch footer icons -->
<path d="M950.500 143.500h6v6.500h-6zM950.500 147.500l2.500-2.500" fill="none" stroke="#8a8a8a" stroke-width="1"/><path d="M970.500 145.500h6M971.500 145.500v5h4v-5M972.500 144h2" fill="none" stroke="#8a8a8a" stroke-width="1"/>
</svg>
<!-- SOGOU IME BAR -->
<div class="a" style="left:840px;top:381px;width:151px;height:17.500px;background:#fdfeff;border:1px solid #cfe0f2"></div>
<div class="a" style="left:840px;top:379px;width:21px;height:21px;background:linear-gradient(135deg,#f0562a,#e02818);border-radius:3px;transform:skewX(-4deg)"></div>
<div class="t" style="left:843px;top:378px;font-size:22px;font-weight:bold;color:#fff;font-family:'Liberation Sans',sans-serif">S</div>
<div class="t" style="left:865px;top:384px;font-size:11.500px;font-weight:bold;color:#1b6cc4">中</div>
<div class="t" style="left:945px;top:384px;font-size:11.500px;font-weight:bold;color:#1b6cc4">全</div>
<div class="t" style="left:961px;top:384px;font-size:11.500px;font-weight:bold;color:#1b6cc4">简</div>
<svg class="a" style="left:840px;top:379px" width="152" height="22" viewBox="0 0 152 22">
<path d="M49.500 5.500a5.800 5.800 0 1 0 3 9a5 5 0 0 1-3-9z" fill="#1b6cc4" transform="rotate(-25 47 11)"/>
<circle cx="59.500" cy="8" r="1.300" fill="#1b6cc4"/><path d="M64.500 12.500a1.600 1.600 0 1 1 1.200 1.500q0 2-1.700 3q2.800-0.500 2.800-3.500" fill="#1b6cc4"/><circle cx="65.500" cy="12.800" r="1.700" fill="#1b6cc4"/>
<rect x="71" y="5.500" width="15" height="10.500" rx="1.200" fill="#1b6cc4"/><path d="M73 8.500h11M73 11h11" stroke="#fff" stroke-width="1.100" stroke-dasharray="1.600 1"/><path d="M75 13.700h7" stroke="#fff" stroke-width="1.100"/>
<circle cx="96" cy="6.500" r="2.600" fill="#1b6cc4"/><path d="M91 16.500q0-6.500 5-6.500q5 0 5 6.500z" fill="#1b6cc4"/><rect x="98.500" y="12" width="4.500" height="5" fill="#3a4a5a"/>
<path d="M140.500 4a4 4 0 0 1 5.500 1l-3 2.500l0.500 1.500l3.500-2a4 4 0 0 1-5.500 4l-5.500 6.500l-2-1.800l6-6a4 4 0 0 1 0.500-5.700z" fill="#1b6cc4"/>
</svg>
<!-- STATUS BAR -->
<div class="a" style="left:28px;top:521px;width:722px;height:4px;background:#444"></div>
<div class="a" style="left:28px;top:521px;width:192px;height:4px;background:#505050"></div>
<div class="t" style="left:37px;top:522.500px;font-size:9px;color:#ccc">100%</div>
<div class="t" style="left:110px;top:522.500px;font-size:9px;color:#ccc">文档:146.3K/1.28M</div>
<div class="a" style="left:749px;top:521px;width:15px;height:4px;background:#4a4a4a"></div>
<!-- edge widget -->
<div class="a" style="left:993px;top:410px;width:7px;height:42px;background:#34424a;border-radius:2px 0 0 2px"></div>
<div class="a" style="left:996px;top:424px;width:3px;height:22px;background:#5a8a6a"></div>
<!-- CANVAS -->
<div class="a" style="left:750px;top:60px;width:14px;height:461px;background:#444"></div>
<svg class="a" style="left:0;top:0" width="1000" height="525" viewBox="0 0 1000 525">
<defs>
<linearGradient id="cupg" x1="0" x2="1" y1="0" y2="0"><stop offset="0" stop-color="#f6f6f6"/><stop offset="0.450" stop-color="#fdfdfd"/><stop offset="1" stop-color="#dedede"/></linearGradient>
</defs>
<rect x="206.800" y="179.400" width="366.400" height="221.200" fill="#ffffff"/>
<!-- table legs -->
<path d="M213 225H232.500V344Q232.500 348.500 223 349Q213 348 213 343Z" fill="#625a28"/>
<path d="M456 248H475.500V310Q475.500 314 465.500 314Q456 314 456 310Z" fill="#625a28"/>
<path d="M543 233H563V355Q563 360 553 360Q543 359 543 353Z" fill="#625a28"/>
<path d="M280 274H302.500V399H286Q280 399 280 392Z" fill="#635b28"/>
<!-- table top -->
<path d="M207.500 220.500L468 180.300L570 229.500L288 271.500Z" fill="#736930"/>
<path d="M207.500 220.500L288 271.500V280L207.500 229Z" fill="#6e642c"/>
<path d="M288 271.500L570 229.500V238.500L288 280Z" fill="#70662d"/>
<path d="M207.500 221.200L288 272L570 230" fill="none" stroke="#8f8442" stroke-width="0.900"/>
<!-- cup -->
<rect x="284.500" y="204" width="5" height="58" fill="#f6f6f6"/>
<path d="M282.500 235.500Q292 238.500 304 244.500" fill="none" stroke="#f8f8f8" stroke-width="5" stroke-linecap="round"/>
<circle cx="282.500" cy="234.500" r="3.200" fill="#f8f8f8"/>
<path d="M344 227Q352 221 359 223.500Q363.500 227 357.500 241Q351 252 340 252" fill="none" stroke="#f7f4e8" stroke-width="4.600"/>
<path d="M299.500 216.500Q299 212.500 323 212.500Q347 212.500 346.500 216.500C346 236 343 252 338 262H312C306 252 300.500 236 299.500 216.500Z" fill="url(#cupg)"/>
<ellipse cx="323" cy="215" rx="23" ry="2.200" fill="#ececec"/>
<!-- face -->
<ellipse cx="317.300" cy="243.300" rx="1.900" ry="2.700" fill="#111"/>
<ellipse cx="331.700" cy="243.300" rx="1.900" ry="2.700" fill="#111"/>
<circle cx="317.700" cy="242.500" r="0.700" fill="#fff"/><circle cx="332.100" cy="242.500" r="0.700" fill="#fff"/>
<path d="M313 237.500Q316 235 320 236.500M327 236.500Q331 235 335 237.500" fill="none" stroke="#222" stroke-width="0.900"/>
<path d="M314.500 239.500l1.500 1M334.500 239.500l-1.500 1" stroke="#222" stroke-width="0.700"/>
<path d="M316 250.500Q323 257.500 332.500 249.500" fill="none" stroke="#222" stroke-width="0.900"/>
<path d="M325.500 255.500L330 254.800L328.200 259.800Z" fill="#d4261c"/>
<path d="M324.500 266l1-3M329.500 266l1-3" stroke="#b5452c" stroke-width="0.800"/>
<!-- transform box -->
<path d="M280 203H321" stroke="#3a3a3a" stroke-width="1" fill="none"/>
<path d="M321 203H363.500V262H280V203" stroke="#858585" stroke-width="0.900" fill="none"/>
<rect x="278" y="201" width="4" height="4" fill="#2a2a2a" stroke="#e8e8e8" stroke-width="0.800"/><rect x="319.7" y="201" width="4" height="4" fill="#6a6a6a" stroke="#b0b0b0" stroke-width="0.800"/><rect x="361.5" y="201" width="4" height="4" fill="#6a6a6a" stroke="#b0b0b0" stroke-width="0.800"/>
<rect x="278" y="230.5" width="4" height="4" fill="#6a6a6a" stroke="#b0b0b0" stroke-width="0.800"/><rect x="361.5" y="230.5" width="4" height="4" fill="#6a6a6a" stroke="#b0b0b0" stroke-width="0.800"/>
<rect x="278" y="260" width="4" height="4" fill="#6a6a6a" stroke="#b0b0b0" stroke-width="0.800"/><rect x="319.7" y="260" width="4" height="4" fill="#2a2a2a" stroke="#e8e8e8" stroke-width="0.800"/><rect x="361.5" y="260" width="4" height="4" fill="#6a6a6a" stroke="#b0b0b0" stroke-width="0.800"/>
<path d="M322.300 230.500v6M319.300 233.500h6" stroke="#555" stroke-width="0.700"/><circle cx="322.300" cy="233.500" r="1.500" fill="none" stroke="#555" stroke-width="0.700"/>
<!-- red rectangle -->
<rect x="149.700" y="145.200" width="334.500" height="166.800" fill="none" stroke="#de3a3c" stroke-width="2.600"/>
<!-- arrows -->
<path d="M303 323L314.760 324.830L313.600 327.210L427.300 416.300L310 332.010L306.880 333.660Z" fill="#f03030"/>
<path d="M733.700 45.400L743.670 51.720L740.790 51.610L863.860 254.170L866.420 262L860.620 256.150L736.010 54.530L734.810 57.160Z" fill="#f03030"/>
</svg>
</body>
</html>
